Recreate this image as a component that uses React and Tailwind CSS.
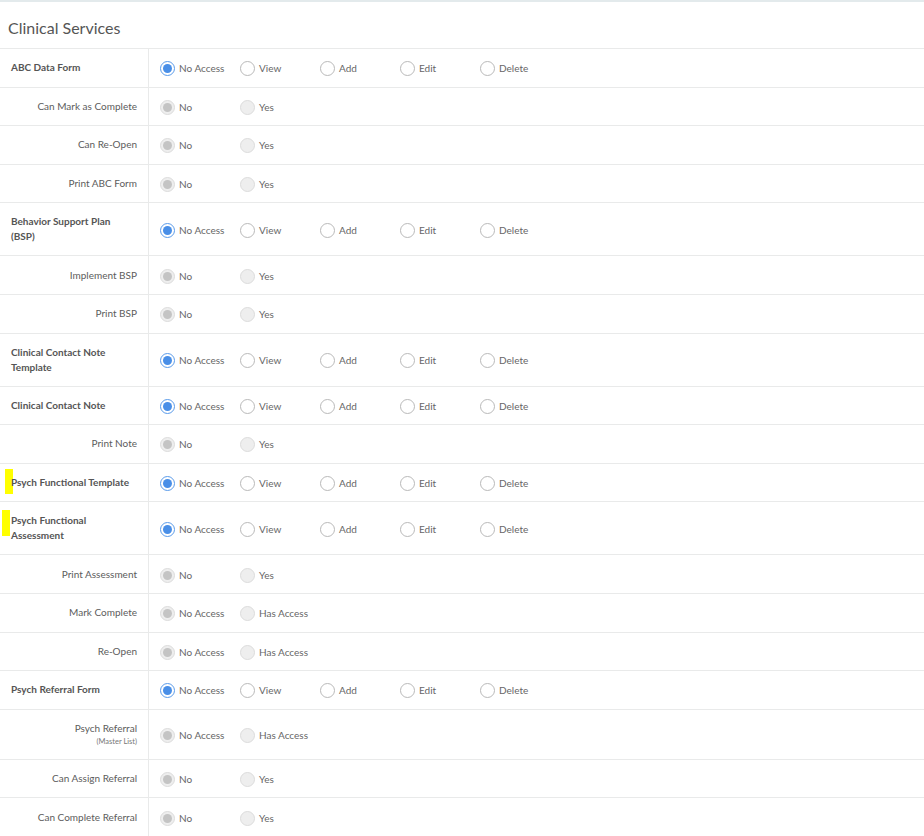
import React from "react";

const FULL = ["No Access", "View", "Add", "Edit", "Delete"];

const rows = [
  { label: "ABC Data Form", parent: true, options: FULL },
  { label: "Can Mark as Complete", options: ["No", "Yes"] },
  { label: "Can Re-Open", options: ["No", "Yes"] },
  { label: "Print ABC Form", options: ["No", "Yes"] },
  { label: "Behavior Support Plan (BSP)", parent: true, tall: true, options: FULL },
  { label: "Implement BSP", options: ["No", "Yes"] },
  { label: "Print BSP", options: ["No", "Yes"] },
  { label: "Clinical Contact Note Template", parent: true, tall: true, options: FULL },
  { label: "Clinical Contact Note", parent: true, options: FULL },
  { label: "Print Note", options: ["No", "Yes"] },
  { label: "Psych Functional Template", parent: true, options: FULL, mark: "one" },
  { label: "Psych Functional Assessment", parent: true, tall: true, options: FULL, mark: "two" },
  { label: "Print Assessment", options: ["No", "Yes"] },
  { label: "Mark Complete", options: ["No Access", "Has Access"] },
  { label: "Re-Open", options: ["No Access", "Has Access"] },
  { label: "Psych Referral Form", parent: true, options: FULL },
  { label: "Psych Referral", sub: "(Master List)", options: ["No Access", "Has Access"] },
  { label: "Can Assign Referral", options: ["No", "Yes"] },
  { label: "Can Complete Referral", options: ["No", "Yes"] },
];

const Radio = ({ checked, disabled }) => {
  if (disabled) {
    return (
      <span className="flex items-center justify-center w-[15px] h-[15px] rounded-full border border-[#dcdcdc] bg-[#eeeeee] shrink-0">
        {checked && <span className="w-[9px] h-[9px] rounded-full bg-[#c4c4c4]" />}
      </span>
    );
  }
  return (
    <span
      className={
        "flex items-center justify-center w-[15px] h-[15px] rounded-full border bg-white shrink-0 " +
        (checked ? "border-[#5a9bea]" : "border-[#b9b9b9]")
      }
    >
      {checked && <span className="w-[9px] h-[9px] rounded-full bg-[#4a8fe7]" />}
    </span>
  );
};

const Row = ({ row }) => {
  const disabled = !row.parent;
  return (
    <div
      className={
        "flex border-b border-[#e9eaea] " +
        (row.tall ? "h-[53px]" : row.sub ? "h-[50px]" : "h-[38.6px]")
      }
    >
      <div
        className={
          "relative w-[149px] shrink-0 border-r border-[#e9eaea] flex flex-col justify-center " +
          (row.parent
            ? "pl-[11px] pr-1 font-bold text-[#555]"
            : "items-end pr-[11px] text-right text-[#5c5c5c]")
        }
      >
        {row.mark === "one" && (
          <span className="absolute left-[5px] top-[5px] w-[8px] h-[25px] bg-[#ffff00]" />
        )}
        {row.mark === "two" && (
          <span className="absolute left-[2px] top-[8px] w-[8px] h-[26px] bg-[#ffff00]" />
        )}
        <span className="relative max-w-[122px] text-[10px] leading-[15px]">{row.label}</span>
        {row.sub && <span className="text-[7.5px] leading-[11px] text-[#777]">{row.sub}</span>}
      </div>
      <div className="flex items-center pl-[11px]">
        {row.options.map((opt, i) => (
          <div key={opt} className="flex items-center gap-[4px] w-[80px] pt-[2px]">
            <Radio checked={i === 0} disabled={disabled} />
            <span className="text-[10px] text-[#666] whitespace-nowrap">{opt}</span>
          </div>
        ))}
      </div>
    </div>
  );
};

const App = () => {
  return (
    <div
      className="w-[924px] h-[836px] overflow-hidden bg-white border-t-2 border-[#e3eaec]"
      style={{ fontFamily: 'Lato, "Open Sans", Arial, sans-serif' }}
    >
      <h2 className="h-[46px] pl-2 pt-[15px] text-[16px] leading-[22px] text-[#555]">
        Clinical Services
      </h2>
      <div className="border-t border-[#e9eaea]">
        {rows.map((row) => (
          <Row key={row.label} row={row} />
        ))}
      </div>
    </div>
  );
};

export default App;
